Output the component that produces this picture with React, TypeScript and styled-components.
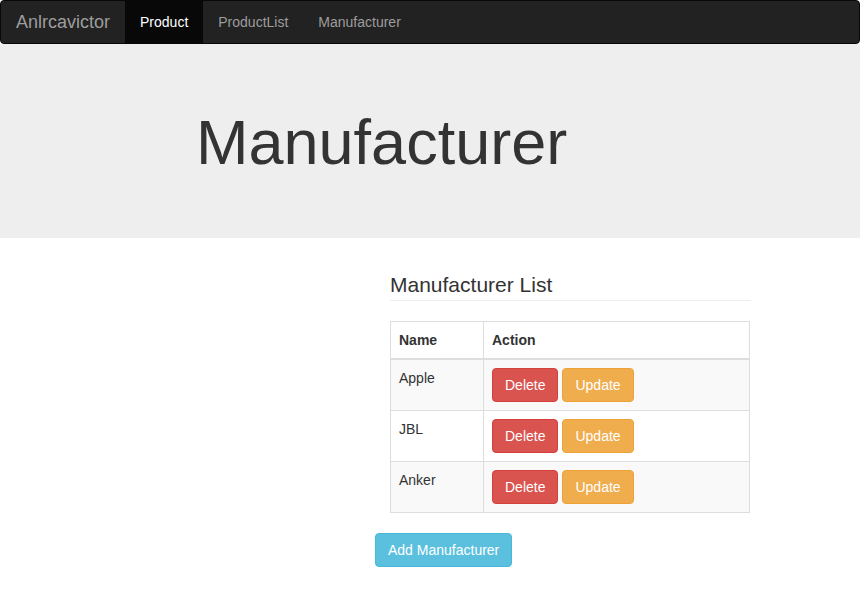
import React from "react";
import styled, { createGlobalStyle } from "styled-components";

const Global = createGlobalStyle`
  * { box-sizing: border-box; }
  html, body { margin: 0; padding: 0; background: #fff; }
  body {
    font-family: "Liberation Sans", Arial, Helvetica, sans-serif;
    font-size: 14px;
    line-height: 1.42857;
    color: #333;
  }
`;

const Navbar = styled.nav`
  display: flex;
  align-items: stretch;
  height: 44px;
  background: #222;
  border: 1px solid #080808;
  border-radius: 4px;
`;

const Brand = styled.a`
  padding: 0 15px;
  font-size: 18px;
  line-height: 42px;
  color: #9d9d9d;
  text-decoration: none;
`;

const NavItem = styled.a<{ $active?: boolean }>`
  padding: 0 15px;
  line-height: 42px;
  font-size: 14px;
  color: ${(p) => (p.$active ? "#fff" : "#9d9d9d")};
  background: ${(p) => (p.$active ? "#080808" : "transparent")};
  text-decoration: none;
`;

const Jumbotron = styled.header`
  background: #eee;
  padding: 64px 0 61px 196px;
`;

const Title = styled.h1`
  margin: 0;
  font-size: 63px;
  line-height: 69px;
  font-weight: 400;
  color: #333;
`;

const Content = styled.main`
  padding: 35px 0 0 375px;
`;

const Column = styled.section`
  width: 390px;
  padding-left: 15px;
`;

const SectionTitle = styled.h3`
  margin: 0 0 20px;
  width: 361px;
  padding-bottom: 4px;
  font-size: 21px;
  line-height: 23px;
  font-weight: 400;
  color: #333;
  border-bottom: 1px solid #eee;
`;

const Table = styled.table`
  width: 360px;
  border-collapse: collapse;
  border: 1px solid #ddd;
  margin-bottom: 20px;
`;

const Th = styled.th<{ $w?: number }>`
  text-align: left;
  padding: 8px;
  line-height: 20px;
  font-weight: 700;
  border: 1px solid #ddd;
  border-bottom: 2px solid #ddd;
  ${(p) => (p.$w ? `width: ${p.$w}px;` : "")}
`;

const Tr = styled.tr<{ $striped?: boolean }>`
  background: ${(p) => (p.$striped ? "#f9f9f9" : "#fff")};
`;

const Td = styled.td`
  padding: 8px;
  line-height: 20px;
  vertical-align: top;
  border: 1px solid #ddd;
`;

const Actions = styled.div`
  display: flex;
  gap: 4px;
`;

const palette = {
  danger: { bg: "#d9534f", border: "#d43f3a" },
  warning: { bg: "#f0ad4e", border: "#eea236" },
  info: { bg: "#5bc0de", border: "#46b8da" },
};

const Button = styled.button<{ $kind: keyof typeof palette }>`
  display: inline-block;
  height: 34px;
  padding: 6px 12px;
  font-family: inherit;
  font-size: 14px;
  line-height: 20px;
  color: #fff;
  background: ${(p) => palette[p.$kind].bg};
  border: 1px solid ${(p) => palette[p.$kind].border};
  border-radius: 4px;
  cursor: pointer;
`;

const rows = ["Apple", "JBL", "Anker"];

export default function App() {
  return (
    <>
      <Global />
      <Navbar>
        <Brand href="#">Anlrcavictor</Brand>
        <NavItem href="#" $active>
          Product
        </NavItem>
        <NavItem href="#">ProductList</NavItem>
        <NavItem href="#">Manufacturer</NavItem>
      </Navbar>
      <Jumbotron>
        <Title>Manufacturer</Title>
      </Jumbotron>
      <Content>
        <Column>
          <SectionTitle>Manufacturer List</SectionTitle>
          <Table>
            <thead>
              <tr>
                <Th $w={93}>Name</Th>
                <Th>Action</Th>
              </tr>
            </thead>
            <tbody>
              {rows.map((name, i) => (
                <Tr key={name} $striped={i % 2 === 0}>
                  <Td>{name}</Td>
                  <Td>
                    <Actions>
                      <Button $kind="danger">Delete</Button>
                      <Button $kind="warning">Update</Button>
                    </Actions>
                  </Td>
                </Tr>
              ))}
            </tbody>
          </Table>
        </Column>
        <Button $kind="info">Add Manufacturer</Button>
      </Content>
    </>
  );
}
